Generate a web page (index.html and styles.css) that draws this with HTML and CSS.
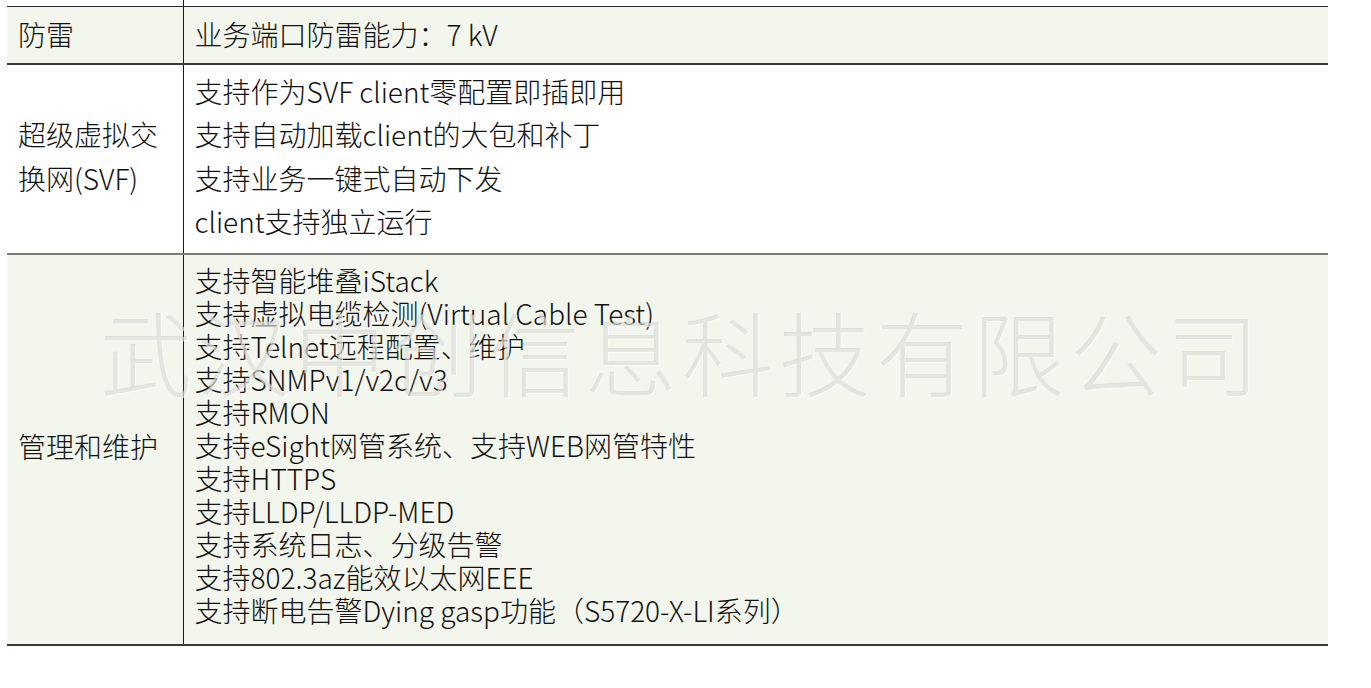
FILE: index.html
```html
<!DOCTYPE html>
<html lang="zh-CN">
<head>
<meta charset="utf-8">
<title>规格表</title>
<link rel="stylesheet" href="styles.css">
</head>
<body>
<div class="sheet">
  <table class="spec">
    <colgroup>
      <col class="col-name">
      <col class="col-value">
    </colgroup>
    <tr class="prev">
      <td class="name"></td>
      <td class="value"></td>
    </tr>
    <tr class="row shaded first">
      <td class="name">防雷</td>
      <td class="value">业务端口防雷能力：7 kV</td>
    </tr>
    <tr class="row plain second">
      <td class="name">超级虚拟交换网(SVF)</td>
      <td class="value">
        <div>支持作为SVF client零配置即插即用</div>
        <div>支持自动加载client的大包和补丁</div>
        <div>支持业务一键式自动下发</div>
        <div>client支持独立运行</div>
      </td>
    </tr>
    <tr class="row shaded third">
      <td class="name">管理和维护</td>
      <td class="value dense">
        <div>支持智能堆叠iStack</div>
        <div>支持虚拟电缆检测(Virtual Cable Test)</div>
        <div>支持Telnet远程配置、维护</div>
        <div>支持SNMPv1/v2c/v3</div>
        <div>支持RMON</div>
        <div>支持eSight网管系统、支持WEB网管特性</div>
        <div>支持HTTPS</div>
        <div>支持LLDP/LLDP-MED</div>
        <div>支持系统日志、分级告警</div>
        <div>支持802.3az能效以太网EEE</div>
        <div>支持断电告警Dying gasp功能（S5720-X-LI系列）</div>
      </td>
    </tr>
  </table>
  <div class="watermark">武汉中创信息科技有限公司</div>
</div>
</body>
</html>
```

FILE: styles.css
```css
html, body {
  margin: 0;
  padding: 0;
  background: #ffffff;
}

body {
  font-family: "Noto Sans CJK SC", "Noto Sans", sans-serif;
  color: #111111;
}

.sheet {
  position: relative;
  padding-left: 7px;
  width: 1321px;
}

.spec {
  border-collapse: collapse;
  width: 1321px;
  table-layout: fixed;
  font-size: 28px;
  font-weight: 300;
  line-height: 43.5px;
}

.col-name {
  width: 176px;
}

.spec td {
  vertical-align: middle;
  padding: 5px 11px 9px 11px;
  text-align: left;
}

.spec td.name {
  border-right: 1px solid #1a1a1a;
}

.prev td {
  height: 6px;
  padding: 0;
  border-bottom: 1px solid #2a2a2a;
}

.first td {
  padding-top: 6px;
  padding-bottom: 6px;
  border-bottom: 2px solid #3a3a3a;
}

.shaded td {
  background: #f3f6ec;
}

.plain td {
  background: #ffffff;
}

.second td {
  border-bottom: 2px solid #7b7c75;
}

.third td {
  border-bottom: 2px solid #3a3a3a;
}

.value.dense {
  line-height: 33px;
  padding-top: 9px;
  padding-bottom: 17px;
}

.watermark {
  position: absolute;
  left: 100px;
  top: 290px;
  font-size: 92px;
  font-weight: 300;
  letter-spacing: 5px;
  line-height: 120px;
  white-space: nowrap;
  color: rgba(150, 152, 145, 0.22);
  text-shadow: 1px 1px 0 rgba(255, 255, 255, 0.6);
  pointer-events: none;
}
```
